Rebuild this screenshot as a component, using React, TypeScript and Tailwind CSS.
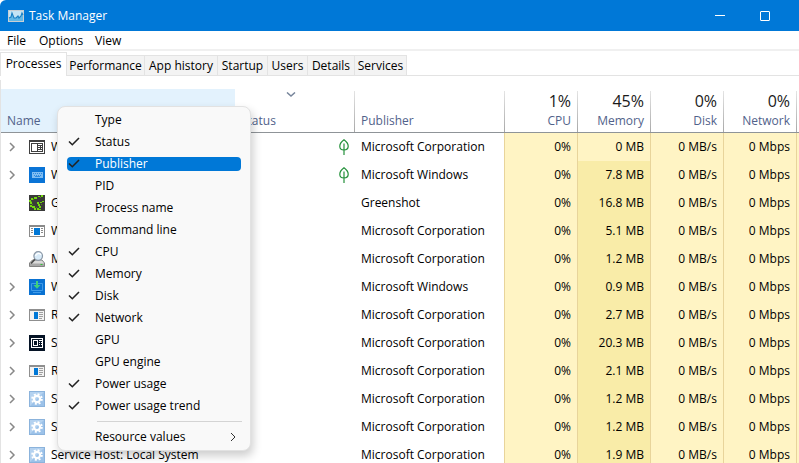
import React from 'react';

type IconKind = 'window' | 'keyboard' | 'greenshot' | 'list' | 'search' | 'download' | 'runtime' | 'start' | 'gear';

interface Process {
  name: string;
  icon: IconKind;
  expandable: boolean;
  eco?: boolean;
  publisher: string;
  memory: string;
}

const processes: Process[] = [
  { name: 'W', icon: 'window', expandable: true, eco: true, publisher: 'Microsoft Corporation', memory: '0 MB' },
  { name: 'W', icon: 'keyboard', expandable: true, eco: true, publisher: 'Microsoft Windows', memory: '7.8 MB' },
  { name: 'G', icon: 'greenshot', expandable: false, publisher: 'Greenshot', memory: '16.8 MB' },
  { name: 'W', icon: 'list', expandable: false, publisher: 'Microsoft Corporation', memory: '5.1 MB' },
  { name: 'M', icon: 'search', expandable: false, publisher: 'Microsoft Corporation', memory: '1.2 MB' },
  { name: 'W', icon: 'download', expandable: true, publisher: 'Microsoft Windows', memory: '0.9 MB' },
  { name: 'R', icon: 'runtime', expandable: true, publisher: 'Microsoft Corporation', memory: '2.7 MB' },
  { name: 'S', icon: 'start', expandable: true, publisher: 'Microsoft Corporation', memory: '20.3 MB' },
  { name: 'R', icon: 'runtime', expandable: true, publisher: 'Microsoft Corporation', memory: '2.1 MB' },
  { name: 'S', icon: 'gear', expandable: true, publisher: 'Microsoft Corporation', memory: '1.2 MB' },
  { name: 'S', icon: 'gear', expandable: true, publisher: 'Microsoft Corporation', memory: '1.2 MB' },
  { name: 'Service Host: Local System', icon: 'gear', expandable: true, publisher: 'Microsoft Corporation', memory: '1.9 MB' },
];

const tabs = [
  { label: 'Performance', width: 'w-[78px]' },
  { label: 'App history', width: 'w-[73px]' },
  { label: 'Startup', width: 'w-[50px]' },
  { label: 'Users', width: 'w-[40px]' },
  { label: 'Details', width: 'w-[47px]' },
  { label: 'Services', width: 'w-[52px]' },
];

const usage = [
  { value: '1%', label: 'CPU' },
  { value: '45%', label: 'Memory' },
  { value: '0%', label: 'Disk' },
  { value: '0%', label: 'Network' },
];

const columns = [
  { label: 'Type', checked: false },
  { label: 'Status', checked: true },
  { label: 'Publisher', checked: true },
  { label: 'PID', checked: false },
  { label: 'Process name', checked: false },
  { label: 'Command line', checked: false },
  { label: 'CPU', checked: true },
  { label: 'Memory', checked: true },
  { label: 'Disk', checked: true },
  { label: 'Network', checked: true },
  { label: 'GPU', checked: false },
  { label: 'GPU engine', checked: false },
  { label: 'Power usage', checked: true },
  { label: 'Power usage trend', checked: true },
];

const drawings: Record<IconKind, React.ReactNode> = {
  window: (
    <g shapeRendering="crispEdges">
      <rect y="1" width="16" height="14" fill="#3f3f3f" />
      <rect x="1" y="3" width="14" height="11" fill="#fff" />
      <rect x="2" y="4" width="12" height="9" fill="#3f3f3f" />
      <rect x="3" y="5" width="5" height="7" fill="#fff" />
      <path d="M9 5h4v1H9zM9 7h2v1H9zM12 7h1v1h-1zM9 9h2v1H9zM12 9h1v1h-1zM9 11h4v1H9z" fill="#fff" />
    </g>
  ),
  keyboard: (
    <g shapeRendering="crispEdges">
      <rect width="16" height="16" fill="#0a74d6" />
      <rect x="3" y="5" width="11" height="6" fill="#7fbdf2" />
      <path d="M4 6h1v1H4zM6 6h1v1H6zM8 6h1v1H8zM10 6h1v1h-1zM12 6h1v1h-1zM5 8h1v1H5zM7 8h1v1H7zM9 8h1v1H9zM11 8h1v1h-1zM6 10h5v-1H6z" fill="#2d8ae0" />
    </g>
  ),
  greenshot: (
    <g shapeRendering="crispEdges">
      <rect width="16" height="16" fill="#3a3a3a" />
      <path
        d="M9 1h2v1H9zM12 0h2v2h-2zM5 2h3v2H5zM2 3h2v2H2zM0 5h2v2H0zM1 7h2v2H1zM1 10h2v2H1zM3 11h3v2H3zM5 13h2v2H5zM8 13h2v2H8zM10 14h2v1h-2zM10 11h2v2h-2zM9 9h2v2H9zM8 7h2v2H8zM11 7h2v1h-2zM13 6h2v1h-2z"
        fill="#72d80e"
      />
      <path d="M4 4h1v1H4zM2 6h1v1H2zM3 9h1v1H3zM7 12h1v1H7zM11 2h1v1h-1zM12 9h1v1h-1z" fill="#4c8c14" />
    </g>
  ),
  list: (
    <g shapeRendering="crispEdges">
      <rect y="2" width="16" height="12" fill="#8a8a8a" />
      <rect x="1" y="4" width="14" height="9" fill="#fff" />
      <rect x="5" y="5" width="6" height="7" fill="#0078d7" />
      <path d="M2 5h2v1H2zM2 7h2v1H2zM2 9h2v1H2zM12 5h2v1h-2zM12 7h2v1h-2zM12 9h2v1h-2z" fill="#8a8a8a" />
    </g>
  ),
  search: (
    <g>
      <path d="M3.500 9h9.500l2.500 3v3.500H.5V12z" fill="#dadada" stroke="#777" strokeWidth="0.900" />
      <path d="M1 12.500h14V15H1z" fill="#a8a8a8" />
      <path d="M11.500 13h2v1h-2z" fill="#35c335" />
      <path d="M6.200 8 2 12.500" stroke="#4c4c4c" strokeWidth="1.800" />
      <circle cx="9.200" cy="5" r="4.300" fill="#d8ebf9" stroke="#8b98a6" strokeWidth="1.200" />
      <path d="M6.500 4.800a3 3 0 0 1 5.400-1" fill="none" stroke="#fff" strokeWidth="1.200" />
    </g>
  ),
  download: (
    <g>
      <rect width="16" height="16" fill="#0a72d2" />
      <path d="M2.500 4.500h11v7h-11zM4 13.500h8" fill="none" stroke="#3f9be8" />
      <path d="M7 2h2v4h2.500L8 9.800 4.500 6H7z" fill="#3fd07c" />
    </g>
  ),
  runtime: (
    <g shapeRendering="crispEdges">
      <rect y="2" width="16" height="12" fill="#8f8f8f" />
      <rect x="1" y="4" width="14" height="9" fill="#f3f3f3" />
      <rect x="5" y="5" width="4" height="7" fill="#0078d7" />
      <path d="M10 5h4v1h-4zM10 7h4v1h-4zM10 9h4v1h-4zM10 11h3v1h-3z" fill="#a0a0a0" />
    </g>
  ),
  start: (
    <g shapeRendering="crispEdges">
      <rect width="16" height="16" fill="#061426" />
      <path d="M2 3h12v1H2zM2 12h12v1H2zM2 3h1v10H2zM13 3h1v10h-1z" fill="#fff" />
      <path d="M4 5h5v1H4zM4 10h5v1H4zM4 5h1v6H4zM8 5h1v6H8z" fill="#fff" />
      <path d="M10 5h3v1h-3zM10 7h1v1h-1zM12 7h1v1h-1zM10 9h1v1h-1zM12 9h1v1h-1z" fill="#fff" />
    </g>
  ),
  gear: (
    <g>
      <rect x="0.500" y="0.500" width="15" height="15" fill="#9cc2e9" stroke="#8bb3dc" />
      <path d="M1 1h14L1 15z" fill="#b4d2f0" />
      <circle cx="8" cy="8" r="4.900" fill="none" stroke="#fff" strokeWidth="1.800" strokeDasharray="2 1.848" />
      <circle cx="8" cy="8" r="3.100" fill="none" stroke="#fff" strokeWidth="2.200" />
    </g>
  ),
};

function ProcessIcon({ kind }: { kind: IconKind }) {
  return (
    <svg viewBox="0 0 16 16" className="size-4 shrink-0" aria-hidden="true">
      {drawings[kind]}
    </svg>
  );
}

function Chevron({ className }: { className: string }) {
  return (
    <svg viewBox="0 0 8 10" className={className} fill="none" stroke="currentColor" aria-hidden="true">
      <path d="M2 1l4 4-4 4" />
    </svg>
  );
}

function Leaf() {
  return (
    <svg viewBox="0 0 10 16" className="block h-4 w-[10px]" fill="none" stroke="#23903a" strokeWidth="1.200" aria-hidden="true">
      <path d="M5 .8C2 3 .8 5 .8 7.200.8 9.500 2.500 11 5 11s4.200-1.500 4.200-3.800C9.200 5 8 3 5 .8zM5 4.500V16" />
    </svg>
  );
}

function TitleBar() {
  return (
    <header className="flex h-[31px] shrink-0 items-center rounded-tl-md bg-[#0078d7] pr-3 pl-2 text-white">
      <svg viewBox="0 0 16 12" className="h-3 w-4" aria-hidden="true">
        <rect x="0.500" y="0.500" width="15" height="11" fill="#c4e4f5" stroke="#c9cfd3" />
        <path d="M1 8l2-1 1-4 2 5 2 0 2-2 1 2 2-2 1-3 1 2v6H1z" fill="#62b8e6" />
        <path d="M1 8l2-1 1-4 2 5 2 0 2-2 1 2 2-2 1-3 1 2" fill="none" stroke="#1a80c4" strokeWidth="1.100" />
      </svg>
      <h1 className="ml-[5px] grow">Task Manager</h1>
      <button type="button" aria-label="Minimize" className="flex h-full w-[45px] items-center justify-center">
        <span className="h-px w-[10px] bg-white" />
      </button>
      <button type="button" aria-label="Maximize" className="flex h-full w-[45px] items-center justify-center">
        <span className="size-[10px] rounded-[1px] border border-white" />
      </button>
    </header>
  );
}

function ColumnMenu() {
  return (
    <div
      role="menu"
      className="absolute top-[106px] left-[57px] w-[194px] rounded-lg border border-[#e2e2e2] bg-[#f9f9f9] pt-[2px] pb-[2px] shadow-[2px_5px_10px_rgba(0,0,0,0.2)]"
    >
      {columns.map((c) => {
        const active = c.label === 'Publisher';
        return (
          <button
            key={c.label}
            type="button"
            role="menuitemcheckbox"
            aria-checked={c.checked}
            className="flex h-[22px] w-full items-center px-[9px] text-left"
          >
            <span className={active ? 'flex h-[14px] grow items-center rounded bg-[#0078d7] text-white' : 'flex h-[14px] grow items-center'}>
              <span className="w-7 pl-px text-[#222]">
                {c.checked && (
                  <svg viewBox="0 0 12 10" className="h-[10px] w-3" fill="none" stroke="currentColor" strokeWidth="1.600" aria-hidden="true">
                    <path d="M1 4.500l3.300 3.200L11 1" />
                  </svg>
                )}
              </span>
              {c.label}
            </span>
          </button>
        );
      })}
      <hr className="mt-1 mr-2 mb-1 ml-[39px] border-[#d4d4d4]" />
      <button type="button" role="menuitem" aria-haspopup="menu" className="flex h-[22px] w-full items-center pr-[13px] pl-[37px] text-left">
        <span className="grow">Resource values</span>
        <Chevron className="h-[10px] w-2 text-[#333]" />
      </button>
    </div>
  );
}

const divider = 'bg-[linear-gradient(#e4e4e4,#a8a8a8)] bg-[length:1px_41px] bg-left-bottom bg-no-repeat';
const heading = 'border-b border-[#8f9498] p-0 font-normal text-[#51628a]';
const metric = 'border-l border-[#e8d49b] p-0 pr-[6px] text-right';

function ProcessTable() {
  return (
    <table className="w-full table-fixed border-separate border-spacing-0 whitespace-nowrap">
      <colgroup>
        <col />
        <col className="w-[119px]" />
        <col className="w-[150px]" />
        <col className="w-[73px]" />
        <col className="w-[73px]" />
        <col className="w-[73px]" />
        <col className="w-[73px]" />
        <col className="w-[3px]" />
      </colgroup>
      <thead>
        <tr className="h-11">
          <th scope="col" className={`${heading} bg-[#e3f2fd] pb-[3px] pl-[6px] text-left align-bottom`}>
            Name
          </th>
          <th scope="col" className={`${heading} pb-[3px] pl-[6px] text-left align-bottom`}>
            <svg viewBox="0 0 10 5" className="mb-4 ml-[45px] h-[5px] w-[10px]" fill="none" stroke="#77859b" strokeWidth="1.500" aria-hidden="true">
              <path d="M1 .5l4 3.500 4-3.500" />
            </svg>
            Status
          </th>
          <th scope="col" className={`${heading} ${divider} pb-[3px] pl-[7px] text-left align-bottom`}>
            Publisher
          </th>
          {usage.map((u) => (
            <th key={u.label} scope="col" className={`${heading} ${divider} pr-[6px] pb-[3px] text-right align-bottom`}>
              <span className="block text-base leading-6 text-[#1a1a1a]">{u.value}</span>
              {u.label}
            </th>
          ))}
          <td className={`${heading} ${divider}`} />
        </tr>
      </thead>
      <tbody>
        {processes.map((p, i) => (
          <tr key={i} className="h-7">
            <td className="overflow-hidden p-0">
              <div className="flex items-center pl-[7px]">
                <span className="flex w-[21px]">
                  {p.expandable && (
                    <button type="button" aria-label="Expand">
                      <Chevron className="h-[10px] w-2 stroke-[1.5] text-[#888]" />
                    </button>
                  )}
                </span>
                <ProcessIcon kind={p.icon} />
                <span className="ml-[6px]">{p.name}</span>
              </div>
            </td>
            <td className="p-0 pr-[5px]">
              <div className="flex justify-end">{p.eco && <Leaf />}</div>
            </td>
            <td className="p-0 pl-[7px]">{p.publisher}</td>
            <td className={`${metric} bg-[#fff4c4]`}>0%</td>
            <td className={i === 0 ? `${metric} bg-[#fff4c4]` : `${metric} bg-[#f9eca8]`}>{p.memory}</td>
            <td className={`${metric} bg-[#fff4c4]`}>0 MB/s</td>
            <td className={`${metric} bg-[#fff4c4]`}>0 Mbps</td>
            <td className="border-l border-[#e8d49b] bg-[#fff4c4] p-0" />
          </tr>
        ))}
      </tbody>
    </table>
  );
}

export default function App() {
  return (
    <div className="relative flex h-screen flex-col overflow-hidden bg-white font-['Open_Sans','Noto_Sans',sans-serif] text-xs text-black">
      <TitleBar />
      <nav className="flex h-5 shrink-0 items-end border-b-2 border-[#f0f0f0] pl-[7px]">
        <button type="button" className="w-8 text-left">File</button>
        <button type="button" className="w-14 text-left">Options</button>
        <button type="button" className="text-left">View</button>
      </nav>
      <div role="tablist" className="flex h-[25px] shrink-0 items-end border-b border-[#e3e3e3]">
        <button type="button" role="tab" aria-selected="true" className="-mb-px h-6 w-[67px] border border-b-0 border-[#e3e3e3] bg-white pb-[2px]">
          Processes
        </button>
        {tabs.map((t) => (
          <button
            key={t.label}
            type="button"
            role="tab"
            aria-selected="false"
            className={`${t.width} h-5 border-t border-r border-[#e3e3e3] bg-[#f3f3f3]`}
          >
            {t.label}
          </button>
        ))}
      </div>
      <main className="mt-1 min-h-0 grow overflow-hidden border-l border-[#e3e3e3] pt-[9px]">
        <ProcessTable />
      </main>
      <ColumnMenu />
    </div>
  );
}
